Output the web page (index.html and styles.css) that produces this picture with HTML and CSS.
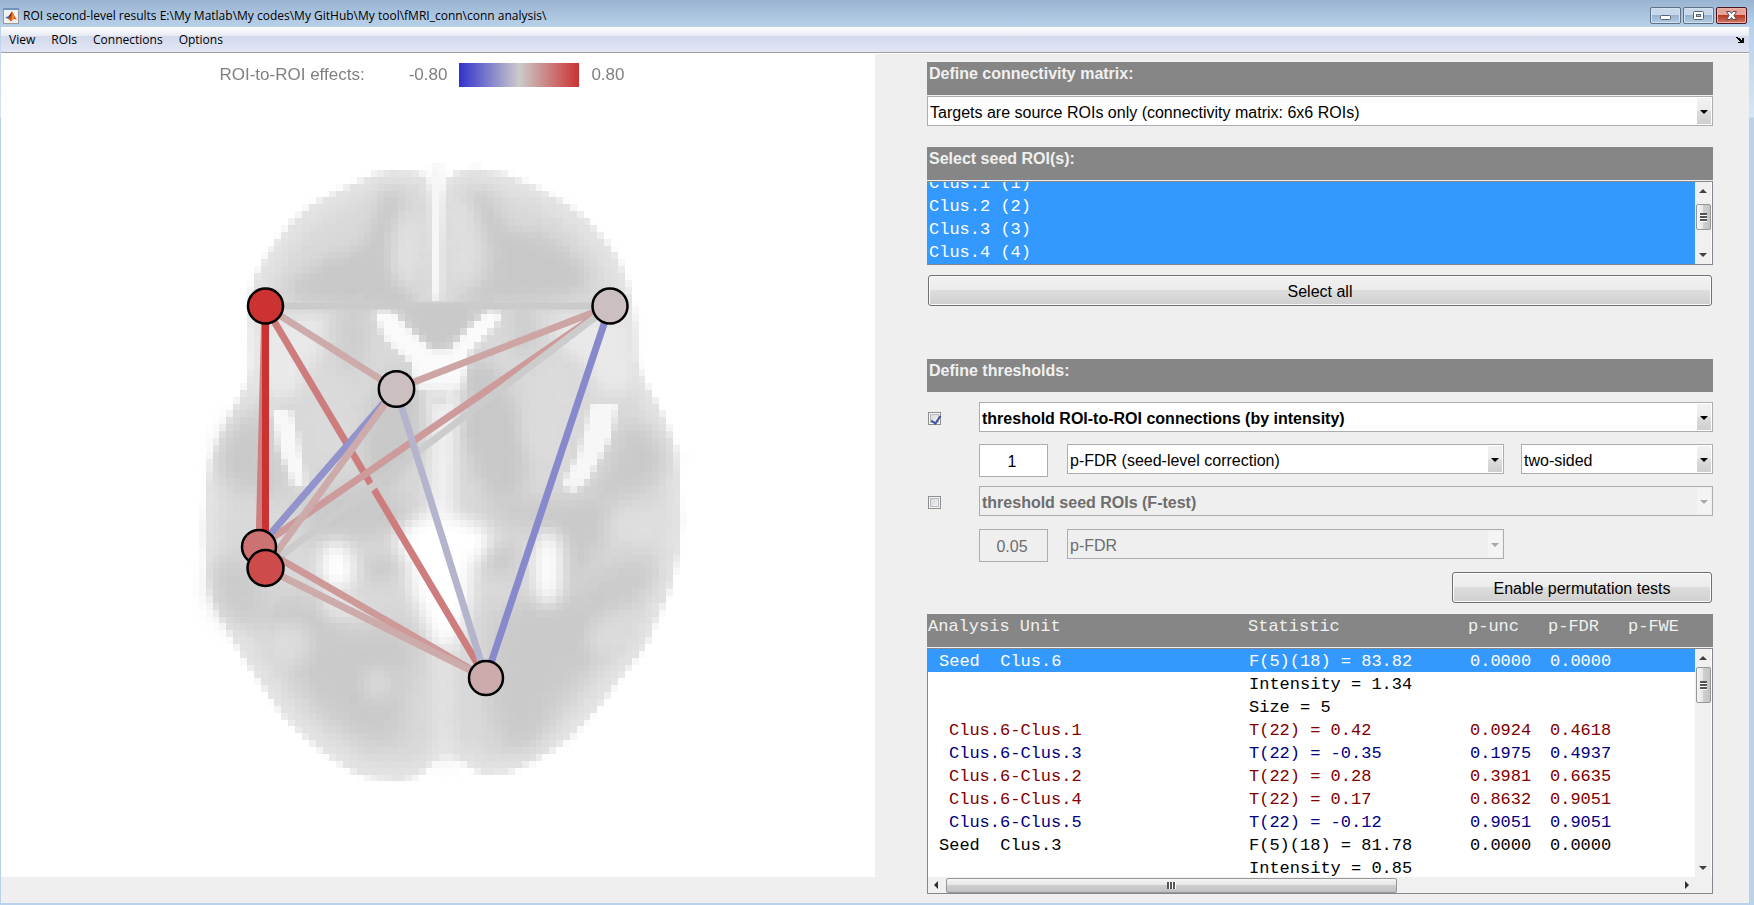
FILE: index.html
```html
<!DOCTYPE html>
<html lang="en">
<head>
<meta charset="utf-8">
<title>ROI second-level results</title>
<link rel="stylesheet" href="styles.css">
</head>
<body>
<div class="window">
  <header class="titlebar">
    <svg class="app-icon" viewBox="0 0 16 16" aria-hidden="true">
      <rect x="0.5" y="0.5" width="15" height="15" fill="#f2f2f2" stroke="#9a9a9a"/>
      <rect x="0" y="0" width="16" height="2" fill="#6f95bd"/>
      <path d="M2 9.500L5.500 8L7.500 6L6.500 11L5 11Z" fill="#4a7fb5"/>
      <path d="M7 6.500C8 5 8.500 4 9 3.500C10.500 5 11.500 9 14 12C12 11 11 10.500 10 11.500C9 12.500 8.500 13.500 7.500 13.500C7 12 6.500 11.500 5 11Z" fill="#d9541e"/>
      <path d="M9 3.500C8.500 6 8 9 5.500 11L7 6.500Z" fill="#7c2417"/>
      <path d="M9 4C9.500 7 9.500 10 8 13C10 12 10.500 10 11 9Z" fill="#f39a2d"/>
    </svg>
    <h1 class="title">ROI second-level results E:\My Matlab\My codes\My GitHub\My tool\fMRI_conn\conn analysis\</h1>
    <div class="window-buttons">
      <button class="wbtn" aria-label="Minimize"><svg viewBox="0 0 31 17"><rect x="10.500" y="8.500" width="10" height="4" rx="1" fill="#fff" stroke="#5b6472"/></svg></button>
      <button class="wbtn" aria-label="Maximize"><svg viewBox="0 0 31 17"><rect x="10.500" y="4.500" width="10" height="8" rx="1" fill="#fff" stroke="#5b6472"/><rect x="13.500" y="7.500" width="4" height="2" fill="#a9c2dc" stroke="#5b6472"/></svg></button>
      <button class="wbtn wbtn-close" aria-label="Close"><svg viewBox="0 0 31 17"><path d="M10.500 4.500H14L15.500 6.500L17 4.500H20.500L18 8.500L20.500 12.500H17L15.500 10.500L14 12.500H10.500L13 8.500Z" fill="#fff" stroke="#5a4a58"/></svg></button>
    </div>
  </header>
  <nav class="menubar">
    <button class="menu">View</button>
    <button class="menu">ROIs</button>
    <button class="menu">Connections</button>
    <button class="menu">Options</button>
    <button class="dock" aria-label="Dock figure"><svg viewBox="0 0 8 6" shape-rendering="crispEdges"><path d="M0 0H2V1H4V2H5V3H6V1H8V6H2V5H4V4H3V3H2V2H1V1H0Z" fill="#000"/></svg></button>
  </nav>
  <main class="content">
    <section class="plot-pane">
      <div class="plot">
        <div class="legend">
          <span class="legend-title">ROI-to-ROI effects:</span>
          <span class="legend-min">-0.80</span>
          <span class="legend-bar"></span>
          <span>0.80</span>
        </div>
        <canvas class="layer" id="brain" width="874" height="823"></canvas>
        <svg class="layer" viewBox="1 54 874 823" role="img" aria-label="Connections between six ROIs">
          <g stroke-width="7">
            <path d="M265 306L610 306" stroke="#cccacb"/>
            <path d="M265 306L396 389" stroke="#cdabab"/>
            <path d="M265 306L486 678" stroke="#cd7d7d"/>
            <path d="M610 306L396 389" stroke="#cda5a5"/>
            <path d="M610 306L259 547" stroke="#cd9b9b"/>
            <path d="M610 306L265 568" stroke="#cccccc"/>
            <path d="M610 306L486 678" stroke="#8888cc"/>
            <path d="M396 389L259 547" stroke="#9292cc"/>
            <path d="M396 389L265 568" stroke="#cdabab"/>
            <path d="M396 389L486 678" stroke="#b4b4cc"/>
            <path d="M259 547L486 678" stroke="#cd9999"/>
            <path d="M265 568L486 678" stroke="#cdabab"/>
            <path d="M265 306L259 547" stroke="#cd8080"/>
            <path d="M265.500 306L265.500 568" stroke="#cc3232"/>
          </g>
          <g stroke="#000" stroke-width="2.500">
            <circle cx="265.500" cy="306" r="17.500" fill="#cc3232"/>
            <circle cx="610" cy="306" r="17.500" fill="#cbbfbf"/>
            <circle cx="396.500" cy="389" r="17.700" fill="#cbbfbf"/>
            <circle cx="259" cy="547" r="17" fill="#cc7272"/>
            <circle cx="265.500" cy="568" r="18" fill="#cd4b4b"/>
            <circle cx="486" cy="678" r="17" fill="#cbabab"/>
          </g>
        </svg>
      </div>
    </section>

    <section class="controls">
      <h2 class="band"><label for="matrix">Define connectivity matrix:</label></h2>
      <div class="drop"><select id="matrix"><option>Targets are source ROIs only (connectivity matrix: 6x6 ROIs)</option></select></div>

      <h2 class="band band-seeds" id="seeds">Select seed ROI(s):</h2>
      <div class="listbox seed-list">
        <ul class="seeds" role="listbox" aria-multiselectable="true" aria-labelledby="seeds">
          <li role="option" aria-selected="true">Clus.1 (1)</li>
          <li role="option" aria-selected="true">Clus.2 (2)</li>
          <li role="option" aria-selected="true">Clus.3 (3)</li>
          <li role="option" aria-selected="true">Clus.4 (4)</li>
        </ul>
        <div class="vscroll">
          <i class="arrow up"></i>
          <i class="thumb thumb-seeds"></i>
          <i class="arrow down"></i>
        </div>
      </div>
      <button class="push">Select all</button>

      <h2 class="band band-thresholds">Define thresholds:</h2>
      <div class="row row-first">
        <input class="tick" type="checkbox" checked aria-label="Apply connection threshold">
        <div class="drop strong"><select aria-label="Connection threshold"><option>threshold ROI-to-ROI connections (by intensity)</option></select></div>
      </div>
      <div class="row row-values">
        <input class="value" type="text" value="1" aria-label="Connection threshold value">
        <div class="drop"><select aria-label="Correction"><option>p-FDR (seed-level correction)</option></select></div>
        <div class="drop sided"><select aria-label="Sidedness"><option>two-sided</option></select></div>
      </div>
      <div class="row row-second">
        <input class="tick" type="checkbox" aria-label="Apply seed threshold">
        <div class="drop strong off"><select disabled aria-label="Seed threshold"><option>threshold seed ROIs (F-test)</option></select></div>
      </div>
      <div class="row row-values">
        <input class="value" type="text" value="0.05" disabled aria-label="Seed threshold value">
        <div class="drop off"><select disabled aria-label="Seed correction"><option>p-FDR</option></select></div>
        <div class="sided"></div>
      </div>
      <button class="push push-tests">Enable permutation tests</button>

      <div class="band columns">
        <span>Analysis Unit</span><span>Statistic</span><span>p-unc</span><span>p-FDR</span><span>p-FWE</span>
      </div>
      <div class="listbox results">
        <div class="rows">
          <table>
            <colgroup><col class="c-unit"><col class="c-stat"><col class="c-p"><col class="c-p"><col></colgroup>
            <tbody>
              <tr class="current"><td>Seed&nbsp; Clus.6</td><td>F(5)(18) = 83.82</td><td>0.0000</td><td>0.0000</td><td></td></tr>
              <tr><td></td><td>Intensity = 1.34</td><td></td><td></td><td></td></tr>
              <tr><td></td><td>Size = 5</td><td></td><td></td><td></td></tr>
              <tr class="pos"><td>Clus.6-Clus.1</td><td>T(22) = 0.42</td><td>0.0924</td><td>0.4618</td><td></td></tr>
              <tr class="neg"><td>Clus.6-Clus.3</td><td>T(22) = -0.35</td><td>0.1975</td><td>0.4937</td><td></td></tr>
              <tr class="pos"><td>Clus.6-Clus.2</td><td>T(22) = 0.28</td><td>0.3981</td><td>0.6635</td><td></td></tr>
              <tr class="pos"><td>Clus.6-Clus.4</td><td>T(22) = 0.17</td><td>0.8632</td><td>0.9051</td><td></td></tr>
              <tr class="neg"><td>Clus.6-Clus.5</td><td>T(22) = -0.12</td><td>0.9051</td><td>0.9051</td><td></td></tr>
              <tr><td>Seed&nbsp; Clus.3</td><td>F(5)(18) = 81.78</td><td>0.0000</td><td>0.0000</td><td></td></tr>
              <tr><td></td><td>Intensity = 0.85</td><td></td><td></td><td></td></tr>
            </tbody>
          </table>
        </div>
        <div class="vscroll">
          <i class="arrow up"></i>
          <i class="thumb thumb-results"></i>
          <i class="arrow down"></i>
        </div>
        <div class="hscroll">
          <i class="arrow left"></i>
          <i class="thumb thumb-across"></i>
          <i class="arrow right"></i>
        </div>
        <div class="corner"></div>
      </div>
    </section>
  </main>
</div>
<script src="brain.js"></script>
</body>
</html>
```
FILE: styles.css
```css
* { box-sizing: border-box; }
body {
  margin: 0;
  font-family: "Liberation Sans", Arial, sans-serif;
  font-size: 16px;
  color: #000;
  background: #b9d1ea;
}
h1, h2, ul { margin: 0; padding: 0; font-size: inherit; font-weight: normal; list-style: none; }
button, input, select { font: inherit; color: inherit; margin: 0; }

.window {
  display: flex;
  flex-direction: column;
  min-height: 100vh;
  padding: 0 5px 2px 1px;
  background: linear-gradient(#99b4d1, #b9d1ea 27px, #c3d8ef 60px, #d8e6f5 117px, #b9d1ea 118px);
}
.titlebar {
  display: flex;
  align-items: center;
  height: 27px;
  padding: 4px 2px 0;
  gap: 4px;
}
.app-icon { width: 16px; height: 16px; }
.title, .menu { font: 12px/16px "Open Sans", "Segoe UI", sans-serif; }
.title { flex: 1; white-space: nowrap; }
.window-buttons { display: flex; gap: 2px; }
.wbtn {
  width: 31px;
  height: 17px;
  padding: 0;
  border: 1px solid #5f7184;
  border-radius: 2px;
  box-shadow: inset 0 0 0 1px #d3e1f0;
  background: linear-gradient(#c6d8ea 50%, #97b3d0 50%, #b4cce4);
}
.wbtn svg { display: block; width: 31px; height: 17px; margin: -1px; }
.wbtn-close {
  border-color: #4a1420;
  box-shadow: inset 0 0 0 1px #eab4aa;
  background: linear-gradient(#e6a396 50%, #b83a20 50%, #d37a62);
}
.menubar {
  display: flex;
  align-items: center;
  height: 27px;
  padding: 0 5px 2px 8px;
  gap: 16px;
  background: linear-gradient(#fff, #e6eaf4 9px, #d3d9ec 9px, #e1e6f6 25px, #a0a0a0 25px, #a0a0a0 26px, #fff 26px);
}
.menu { padding: 0; border: 0; background: none; }
.dock { margin-left: auto; padding: 0; border: 0; background: none; line-height: 0; }
.dock svg { width: 8px; height: 6px; }

.content {
  flex: 1;
  display: grid;
  grid-template-columns: 1fr 1fr;
  background: #efefef;
}
.plot-pane { display: flex; padding-bottom: 26px; }
.plot { flex: 1; display: grid; background: #fff; }
.plot > * { grid-area: 1 / 1; }
.layer { width: 100%; height: 100%; min-height: 0; object-fit: contain; }
.legend {
  display: flex;
  align-items: center;
  align-self: start;
  justify-self: center;
  z-index: 1;
  height: 24px;
  margin-top: 9px;
  margin-right: 32px;
  gap: 12px;
  font-size: 17px;
  color: #808080;
  white-space: nowrap;
}
.legend-title { margin-right: 32px; }
.legend-bar { width: 120px; height: 24px; background: linear-gradient(90deg, #3232cc, #cbcbcb, #cc3232); }

.controls { display: flex; flex-direction: column; padding: 8px 36px 9px 52px; min-width: 0; }
.band {
  height: 33px;
  margin-bottom: 1px;
  padding: 2px;
  background: #868686;
  color: #f0f0f0;
  font-weight: bold;
  line-height: 20px;
}
.band-seeds { margin-top: 21px; }
.band-thresholds { margin-top: 53px; margin-bottom: 10px; }

.drop { position: relative; flex: 1; min-width: 0; }
.controls > .drop { flex: none; }
.drop select {
  display: block;
  width: 100%;
  height: 30px;
  padding: 2px 20px 0 2px;
  border: 1px solid #abadb3;
  border-radius: 0;
  background: #fff;
  appearance: none;
}
.drop::before {
  content: "";
  position: absolute;
  z-index: 1;
  top: 2px;
  right: 2px;
  bottom: 2px;
  width: 14px;
  background: linear-gradient(#f2f2f2, #ebebeb 50%, #dddddd 50%, #cfcfcf);
  pointer-events: none;
}
.drop::after {
  content: "";
  position: absolute;
  z-index: 2;
  top: 14px;
  right: 5px;
  border: 4px solid transparent;
  border-top-color: #000;
  border-bottom: 0;
  pointer-events: none;
}
.strong select { font-weight: bold; }
.off select { background: #efefef; color: #6d6d6d; opacity: 1; }
.off::before { background: #f4f4f4; }
.off::after { border-top-color: #a8a8a8; }
.sided { flex: none; width: 192px; margin-left: 17px; }

.row { display: flex; align-items: center; }
.row-values { align-items: flex-start; margin-top: 12px; padding-left: 52px; }
.row-second { margin-top: 9px; }
.row-second + .row-values { margin-top: 13px; }
.value {
  width: 69px;
  height: 33px;
  margin-right: 19px;
  padding: 2px 3px 0 0;
  border: 1px solid #abadb3;
  background: #fff;
  text-align: center;
}
.value:disabled { background: #efefef; color: #6d6d6d; }
.tick {
  width: 13px;
  height: 13px;
  margin: 3px 38px 0 1px;
  border: 1px solid #8e8f8f;
  box-shadow: inset 0 0 0 1px #f4f4f4, inset 0 0 0 2px #b8bcc2;
  background: linear-gradient(135deg, #cfd2d6, #f8f8f8);
  appearance: none;
  position: relative;
}
.tick:checked::after {
  content: "";
  position: absolute;
  left: 4px;
  top: 1px;
  width: 4px;
  height: 8px;
  border: solid #3c519c;
  border-width: 0 2px 2px 0;
  transform: rotate(35deg);
}
.push {
  height: 31px;
  margin: 10px 1px 0;
  padding-top: 3px;
  border: 1px solid #707070;
  border-radius: 3px;
  box-shadow: inset 0 0 0 1px #fbfbfb;
  background: linear-gradient(#f2f2f2, #ebebeb 50%, #dddddd 50%, #cfcfcf);
}
.push-tests { align-self: flex-end; width: 260px; margin-bottom: 11px; }

.listbox {
  display: grid;
  grid-template-columns: 1fr 17px;
  border: 1px solid #828790;
  background: #fff;
  font: 17px/23px "Liberation Mono", monospace;
}
.seed-list { height: 84px; }
.seeds {
  display: flex;
  flex-direction: column;
  justify-content: flex-end;
  min-height: 0;
  overflow: hidden;
  padding-left: 1px;
  background: #3399ff;
  color: #fff;
}
.seeds li { flex: none; height: 23px; }

.vscroll, .hscroll { display: flex; align-items: center; background: #f0f0f0; }
.vscroll { flex-direction: column; width: 16px; }
.arrow { flex: none; border: 4px solid transparent; }
.up { margin: 7px 0; border-top: 0; border-bottom-color: #404040; }
.down { margin: auto 0 7px; border-bottom: 0; border-top-color: #404040; }
.left { margin: 0 8px 0 6px; border-left: 0; border-right-color: #303030; }
.right { margin: 0 6px 0 auto; border-right: 0; border-left-color: #303030; }
.thumb {
  display: block;
  position: relative;
  flex: none;
  width: 15px;
  border: 1px solid #979797;
  border-radius: 2px;
  background: linear-gradient(90deg, #f5f5f5, #e6e6e6 45%, #cfcfcf 50%, #c4c4c8);
}
.thumb::after {
  content: "";
  position: absolute;
  inset: 0;
  width: 7px;
  height: 9px;
  margin: auto;
  background: repeating-linear-gradient(#555 0 2px, #fff 2px 3px);
}
.thumb-seeds { height: 26px; margin-top: 4px; }
.thumb-results { height: 36px; }
.thumb-across {
  width: 451px;
  flex-shrink: 1;
  height: 15px;
  background: linear-gradient(#f5f5f5, #e6e6e6 45%, #cfcfcf 50%, #c0c0c4);
}
.thumb-across::after { width: 9px; height: 7px; background: repeating-linear-gradient(90deg, #555 0 2px, #fff 2px 3px); }

.columns, .rows tr { white-space: pre; }
.columns {
  display: grid;
  grid-template-columns: 320px 220px 80px 80px 1fr;
  padding: 2px 1px;
  font: 17px/22px "Liberation Mono", monospace;
}
.results { height: 246px; grid-template-rows: 1fr 16px; }
.rows { overflow: hidden; min-height: 0; }
table { width: 100%; table-layout: fixed; border-collapse: collapse; }
.c-unit { width: 321px; }
.c-stat { width: 221px; }
.c-p { width: 80px; }
td { height: 23px; padding: 2px 0 0; line-height: 21px; }
td:first-child { padding-left: 11px; }
.pos td:first-child, .neg td:first-child { padding-left: 21px; }
.pos { color: #800000; }
.neg { color: #000080; }
.current { background: #3399ff; color: #fff; }
.corner { background: #f0f0f0; }
```
FILE: brain.js
```js
// Axial anatomical slice, painted on a coarse voxel grid and enlarged without smoothing.
const VOXEL = 6.87, COLS = 91, ROWS = 96, LEFT = 123.3, TOP = 142.5;
const slice = document.createElement('canvas');
slice.width = COLS;
slice.height = ROWS;
const s = slice.getContext('2d');

function begin(shade, blur) {
  s.setTransform(1 / VOXEL, 0, 0, 1 / VOXEL, -LEFT / VOXEL, -TOP / VOXEL);
  s.filter = 'blur(' + blur + 'px)';
  s.fillStyle = shade;
  s.beginPath();
}
function area(shade, blur, points) {
  begin(shade, blur);
  for (let i = 0; i < points.length; i += 2) s.lineTo(points[i], points[i + 1]);
  s.closePath();
  s.fill();
}
function blob(shade, blur, x, y, rx, ry, turn) {
  begin(shade, blur);
  s.ellipse(x, y, rx, ry, (turn || 0) * Math.PI / 180, 0, 2 * Math.PI);
  s.fill();
}
s.fillStyle = '#fff';
s.fillRect(0, 0, COLS, ROWS);

const outline = [375,173, 395,170, 418,171, 428,178, 434,200, 437,300, 442,200, 446,180, 456,171, 475,168, 505,174, 540,189, 565,202, 588,219, 606,240, 618,258, 627,280, 632,300, 636,330, 637,360, 644,380, 657,402, 667,425, 676,450, 680,480, 681,520, 679,555, 671,587, 661,612, 648,642, 630,667, 612,690, 594,712, 574,735, 553,750, 530,763, 508,772, 482,774, 460,761, 447,755, 433,763, 418,776, 400,781, 378,780, 358,774, 338,762, 320,750, 302,735, 285,718, 270,697, 255,677, 243,657, 231,637, 219,615, 211,597, 206,572, 203,530, 206,490, 210,460, 217,443, 226,424, 236,404, 246,385, 251,365, 250,330, 249,300, 254,278, 265,258, 278,238, 293,220, 312,204, 345,187];
area('#e4e4e4', 0.6, outline);
const inner = outline.map((v, i) => i % 2 ? 475 + (v - 475) * 0.95 : 440 + (v - 440) * 0.93);
area('#d9d9d9', 1.1, inner);

// frontal lobes
area('#c8c8c8', 1.3, [386,188, 402,190, 398,220, 390,240, 392,270, 410,290, 415,310, 300,300, 285,288, 320,262, 362,248, 375,220]);
area('#c8c8c8', 1.3, [470,188, 490,195, 505,228, 545,235, 575,258, 590,280, 575,296, 470,306, 462,295, 488,278, 492,250, 480,220]);
blob('#e0e0e0', 1, 408, 250, 12, 36, 4);
blob('#e0e0e0', 1, 462, 240, 11, 44, -4);
area('#f6f6f6', 0.7, [430,165, 444,165, 442,240, 441,303, 433,303, 432,240]);
// insula and striatum
area('#e9e9e9', 1.2, [255,322, 325,312, 322,345, 300,395, 262,398, 252,360]);
area('#e9e9e9', 1.2, [548,318, 628,318, 634,385, 606,398, 588,370, 560,345]);
blob('#cdcdcd', 1.1, 353, 335, 14, 36, 4);
blob('#cdcdcd', 1.1, 524, 330, 12, 28, -6);
blob('#dadada', 1.2, 328, 415, 22, 48, -8);
blob('#c8c8c8', 1.3, 392, 430, 27, 62, 12);
blob('#c8c8c8', 1.3, 492, 430, 30, 72, -14);
blob('#dbdbdb', 1.2, 550, 410, 24, 52, 12);
// ventricles and midline
area('#c9c9c9', 0.8, [395,308, 486,308, 462,338, 438,352, 416,338]);
area('#fafafa', 0.7, [374,310, 392,310, 408,328, 432,350, 450,350, 468,328, 488,310, 504,312, 494,328, 470,350, 462,388, 415,388, 412,364, 385,338]);
area('#c9c9c9', 0.7, [408,308, 470,308, 456,334, 438,346, 420,334]);
area('#f3f3f3', 0.8, [428,385, 460,385, 454,430, 452,520, 430,520, 434,430]);
blob('#dedede', 0.7, 441, 399, 9, 8);
// temporal lobes
area('#c9c9c9', 1.4, [222,440, 245,415, 268,420, 275,460, 285,495, 240,490, 218,475]);
area('#c9c9c9', 1.4, [625,425, 650,430, 668,458, 655,485, 610,500, 585,515, 600,480]);
area('#f8f8f8', 0.7, [272,408, 292,412, 300,450, 306,488, 294,486, 280,450]);
area('#f7f7f7', 0.7, [592,404, 618,404, 610,440, 590,478, 572,494, 562,484, 578,455]);
area('#c9c9c9', 1.5, [300,500, 345,485, 395,492, 412,515, 392,535, 310,545]);
area('#c9c9c9', 1.5, [480,490, 530,502, 600,500, 618,520, 590,560, 565,600, 565,540, 500,520]);
blob('#dedede', 1.3, 640, 528, 32, 20);
blob('#cbcbcb', 1.5, 238, 590, 26, 36, -20);
blob('#cbcbcb', 1.5, 615, 588, 46, 22, -30);
// occipital lobes
area('#cacaca', 1.8, [262,610, 300,590, 345,630, 400,620, 420,650, 405,690, 402,738, 370,745, 315,705, 285,660]);
area('#cacaca', 1.8, [490,620, 520,600, 570,590, 600,605, 605,650, 560,700, 535,745, 505,750, 488,700]);
blob('#d9d9d9', 1, 378, 684, 14, 18);
area('#ffffff', 1, [425,515, 453,515, 490,532, 492,552, 472,562, 470,600, 458,640, 442,655, 430,630, 412,590, 408,560, 394,545, 402,530]);
area('#e6e6e6', 0.8, [436,650, 451,650, 451,765, 438,765]);
blob('#cacaca', 0.9, 380, 568, 16, 14);
blob('#cacaca', 0.9, 502, 560, 15, 16);
blob('#ffffff', 0.8, 337, 566, 16, 24, -6);
blob('#ffffff', 0.8, 548, 568, 13, 36);
blob('#ececec', 0.8, 340, 606, 20, 8, 20);
blob('#dcdcdc', 1.2, 288, 645, 22, 22, 30);
blob('#dbdbdb', 1.2, 612, 635, 26, 18, -30);

const view = document.getElementById('brain').getContext('2d');
view.imageSmoothingEnabled = false;
view.drawImage(slice, LEFT - 1, TOP - 54, COLS * VOXEL, ROWS * VOXEL);
```
